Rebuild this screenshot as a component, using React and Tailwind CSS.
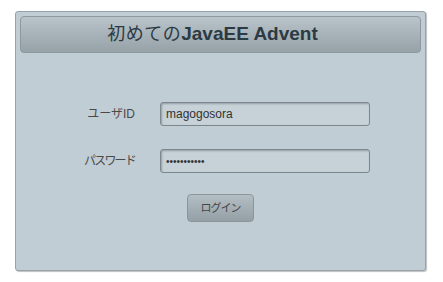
import React from 'react'

const font = { fontFamily: '"Liberation Sans", Arial, "Noto Sans CJK JP", sans-serif' }

export default function App() {
  return (
    <div className="w-[443px] h-[282px] bg-white pt-[11px] pl-[15px]" style={font}>
      <div className="w-[411px] h-[260px] bg-[#c1cdd4] border border-[#98a3a9] rounded-[3px] shadow-[1px_1px_1px_rgba(0,0,0,0.25)] px-[4px] pt-[4px]">
        {/* Title bar */}
        <div className="h-[37px] rounded-[4px] border border-[#8d999f] bg-gradient-to-b from-[#b9c4ca] to-[#97a2a8] flex items-center justify-center pr-[16px]">
          <h1 className="text-[19px] text-[#2c3a44] font-bold pb-[1px]">
            <span className="font-normal text-[18px] tracking-[0.5px]" style={{ fontFamily: '"Noto Sans CJK JP", sans-serif' }}>初めての</span>JavaEE Advent
          </h1>
        </div>

        <div className="mt-[49px] -ml-[4px] flex flex-col">
          <div className="flex items-center h-[24px]">
            <label className="w-[120px] text-right text-[12px] text-[#4a4a4a] pr-[1px]">ユーザID</label>
            <div className="ml-[24px] w-[210px] h-[24px] border border-[#7d888e] rounded-[3px] bg-[#c6d1d8] shadow-[inset_1px_1px_2px_rgba(0,0,0,0.25)] flex items-center px-[5px] text-[12px] text-[#333]">
              magogosora
            </div>
          </div>
          <div className="flex items-center h-[24px] mt-[23px]">
            <label className="w-[120px] text-right text-[12px] text-[#4a4a4a] pr-[1px] tracking-[-1.8px]">パスワード</label>
            <div className="ml-[24px] w-[210px] h-[24px] border border-[#7d888e] rounded-[3px] bg-[#c6d1d8] shadow-[inset_1px_1px_2px_rgba(0,0,0,0.25)] flex items-center px-[5px] text-[10px] text-[#333]">
              •••••••••••
            </div>
          </div>
          <div className="mt-[21px] ml-[171px]">
            <button className="w-[67px] h-[28px] rounded-[4px] border border-[#8b969c] bg-gradient-to-b from-[#b3bec4] to-[#95a0a6] text-[11px] tracking-[-1px] text-[#444]">
              ログイン
            </button>
          </div>
        </div>
      </div>
    </div>
  )
}
